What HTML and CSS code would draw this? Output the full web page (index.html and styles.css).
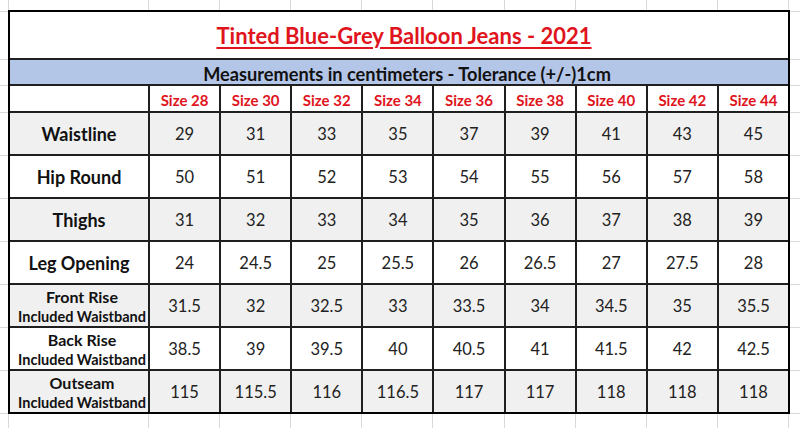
FILE: index.html
```html
<!DOCTYPE html>
<html lang="en">
<head>
<meta charset="utf-8">
<title>Tinted Blue-Grey Balloon Jeans - 2021</title>
<link rel="stylesheet" href="styles.css">
</head>
<body>
<div class="sheet">
  <div class="title"><span>Tinted Blue-Grey Balloon Jeans - 2021</span></div>
  <div class="band">Measurements in centimeters - Tolerance (+/-)1cm</div>

  <div class="head blank"></div>
  <div class="head">Size 28</div>
  <div class="head">Size 30</div>
  <div class="head">Size 32</div>
  <div class="head">Size 34</div>
  <div class="head">Size 36</div>
  <div class="head">Size 38</div>
  <div class="head">Size 40</div>
  <div class="head">Size 42</div>
  <div class="head">Size 44</div>

  <div class="label alt">Waistline</div>
  <div class="val alt">29</div><div class="val alt">31</div><div class="val alt">33</div><div class="val alt">35</div><div class="val alt">37</div><div class="val alt">39</div><div class="val alt">41</div><div class="val alt">43</div><div class="val alt">45</div>

  <div class="label">Hip Round</div>
  <div class="val">50</div><div class="val">51</div><div class="val">52</div><div class="val">53</div><div class="val">54</div><div class="val">55</div><div class="val">56</div><div class="val">57</div><div class="val">58</div>

  <div class="label alt">Thighs</div>
  <div class="val alt">31</div><div class="val alt">32</div><div class="val alt">33</div><div class="val alt">34</div><div class="val alt">35</div><div class="val alt">36</div><div class="val alt">37</div><div class="val alt">38</div><div class="val alt">39</div>

  <div class="label">Leg Opening</div>
  <div class="val">24</div><div class="val">24.5</div><div class="val">25</div><div class="val">25.5</div><div class="val">26</div><div class="val">26.5</div><div class="val">27</div><div class="val">27.5</div><div class="val">28</div>

  <div class="label two alt"><span class="main">Front Rise</span><span class="sub">Included Waistband</span></div>
  <div class="val alt">31.5</div><div class="val alt">32</div><div class="val alt">32.5</div><div class="val alt">33</div><div class="val alt">33.5</div><div class="val alt">34</div><div class="val alt">34.5</div><div class="val alt">35</div><div class="val alt">35.5</div>

  <div class="label two"><span class="main">Back Rise</span><span class="sub">Included Waistband</span></div>
  <div class="val">38.5</div><div class="val">39</div><div class="val">39.5</div><div class="val">40</div><div class="val">40.5</div><div class="val">41</div><div class="val">41.5</div><div class="val">42</div><div class="val">42.5</div>

  <div class="label two alt"><span class="main">Outseam</span><span class="sub">Included Waistband</span></div>
  <div class="val alt">115</div><div class="val alt">115.5</div><div class="val alt">116</div><div class="val alt">116.5</div><div class="val alt">117</div><div class="val alt">117</div><div class="val alt">118</div><div class="val alt">118</div><div class="val alt">118</div>
</div>
</body>
</html>
```

FILE: styles.css
```css
html, body {
  margin: 0;
  padding: 0;
}

body {
  width: 800px;
  height: 428px;
  overflow: hidden;
  background-color: #ffffff;
  background-image:
    linear-gradient(to right,
      transparent 8px, #d9d9d9 8px 9px,
      transparent 9px 148px, #d9d9d9 148px 149px,
      transparent 149px 219px, #d9d9d9 219px 220px,
      transparent 220px 290px, #d9d9d9 290px 291px,
      transparent 291px 361px, #d9d9d9 361px 362px,
      transparent 362px 432px, #d9d9d9 432px 433px,
      transparent 433px 504px, #d9d9d9 504px 505px,
      transparent 505px 575px, #d9d9d9 575px 576px,
      transparent 576px 646px, #d9d9d9 646px 647px,
      transparent 647px 717px, #d9d9d9 717px 718px,
      transparent 718px 788px, #d9d9d9 788px 789px,
      transparent 789px),
    linear-gradient(to bottom,
      transparent 11px, #d9d9d9 11px 12px,
      transparent 12px 59px, #d9d9d9 59px 60px,
      transparent 60px 85px, #d9d9d9 85px 86px,
      transparent 86px 112px, #d9d9d9 112px 113px,
      transparent 113px 155px, #d9d9d9 155px 156px,
      transparent 156px 198px, #d9d9d9 198px 199px,
      transparent 199px 241px, #d9d9d9 241px 242px,
      transparent 242px 284px, #d9d9d9 284px 285px,
      transparent 285px 327px, #d9d9d9 327px 328px,
      transparent 328px 370px, #d9d9d9 370px 371px,
      transparent 371px 413px, #d9d9d9 413px 414px,
      transparent 414px);
  font-family: Lato, "Liberation Sans", Arial, sans-serif;
}

.sheet {
  box-sizing: border-box;
  width: 782px;
  margin: 10px 0 0 8px;
  display: grid;
  grid-template-columns: 138px repeat(9, 1fr);
  grid-template-rows: 46px 24px 25px repeat(7, 41px);
  gap: 2px;
  background: #1f1f1f;
  border: 2px solid #000;
}

.sheet > div {
  display: flex;
  align-items: center;
  justify-content: center;
  background: #ffffff;
  overflow: hidden;
  white-space: nowrap;
}

.title {
  grid-column: 1 / -1;
  font-weight: 700;
  font-size: 22px;
  color: #e0141c;
  padding-left: 10px;
}

.title span {
  text-decoration: underline;
  text-decoration-thickness: 1.5px;
  text-underline-offset: 3px;
}

.band {
  grid-column: 1 / -1;
  background: #b4c6e7 !important;
  font-weight: 700;
  font-size: 18.2px;
  color: #111;
  padding: 3px 0 0 16px;
}

.head {
  font-weight: 700;
  font-size: 15px;
  color: #e0141c;
  padding-top: 2px;
}

.label {
  font-weight: 700;
  font-size: 18px;
  color: #111;
}

.label.two {
  flex-direction: column;
  line-height: 20px;
  padding-left: 6px;
  padding-top: 2px;
}

.label.two .main {
  font-size: 16px;
}

.label.two .sub {
  font-size: 14.5px;
}

.val {
  font-size: 16.5px;
  color: #222;
}

.sheet > .alt {
  background: #f0f0f0;
}
```
